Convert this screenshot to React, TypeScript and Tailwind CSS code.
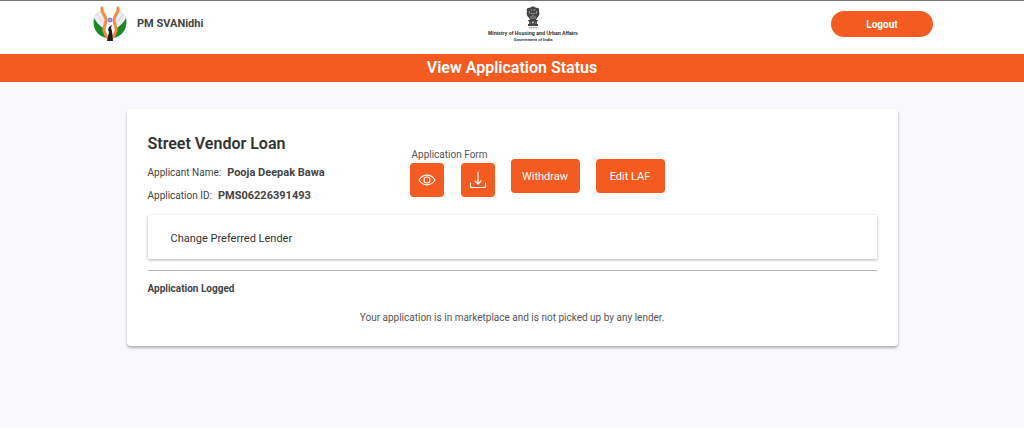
import React from "react";

const details = [
  { label: "Applicant Name:", value: "Pooja Deepak Bawa" },
  { label: "Application ID:", value: "PMS06226391493" },
];

const Logo = () => (
  <svg viewBox="0 0 34 36" className="h-9 w-[34px]" fill="none" aria-hidden="true">
    <path d="M8 5C4 7 2 9 1 13L10 25C12 19 12 13 8 5Z" fill="#eceef4" stroke="#c3c7d4" strokeWidth=".6" />
    <path d="M26 5C30 7 32 9 33 13L24 25C22 19 22 13 26 5Z" fill="#eceef4" stroke="#c3c7d4" strokeWidth=".6" />
    <path d="M4 8L11 18M30 8L23 18" stroke="#c3c7d4" strokeWidth=".7" />
    <path d="M1 12C-1 22 4 30 14 32C11 28 11 25 10 22C6 19 3 16 1 12Z" fill="#188a25" />
    <path d="M33 12C35 22 30 30 20 32C23 28 23 25 24 22C28 19 31 16 33 12Z" fill="#188a25" />
    <path d="M9 2C8 7 13 9 13 14C13 19 10 21 11 25C12 28 13 30 15 32" stroke="#f58a42" strokeWidth="3" strokeLinecap="round" />
    <path d="M25 2C26 7 21 9 21 14C21 19 24 21 23 25C22 28 21 30 19 32" stroke="#f58a42" strokeWidth="3" strokeLinecap="round" />
    <circle cx="17" cy="14" r="2" fill="#aaace8" stroke="#6267c7" strokeWidth="1" />
    <path d="M19 19L16 21L15 24L16 26L14 35H20L19 25L18 22Z" fill="#1c1c1c" />
  </svg>
);

const Emblem = () => (
  <svg viewBox="0 0 16 23" className="h-[23px] w-4" fill="#444" aria-hidden="true">
    <path d="M5 2C6 0 10 0 11 2C13 1 15 3 14 5C15 8 14 10 12 12L11 14H5L4 12C2 10 1 8 2 5C1 3 3 1 5 2Z" />
    <path d="M3 14H13V15H12V18H13V20H3V18H4V15H3Z" />
    <path d="M6 3L7 5M10 3L9 5M4 5L5 8M12 5L11 8M6 7L8 8L10 7M8 9V13M6 10V13M10 10V13" stroke="#bbb" strokeWidth=".7" />
    <circle cx="8" cy="16.5" r="1" fill="#ccc" />
    <path d="M4.5 17H6M10 17H11.5" stroke="#ccc" strokeWidth=".7" />
    <path d="M4 21.7H12" stroke="#777" strokeWidth=".9" strokeDasharray="1.4 .4" />
  </svg>
);

const EyeIcon = () => (
  <svg viewBox="0 0 18 12" className="h-3 w-[18px]" fill="none" stroke="#fff" strokeWidth="1.1" aria-hidden="true">
    <path d="M1 6C5-.5 13-.5 17 6C13 12.5 5 12.5 1 6Z" />
    <circle cx="9" cy="6" r="3" />
  </svg>
);

const DownloadIcon = () => (
  <svg viewBox="0 0 18 18" className="size-[18px]" fill="none" stroke="#fff" strokeWidth="1.2" strokeLinecap="round" strokeLinejoin="round" aria-hidden="true">
    <path d="M9 1V13M6 10L9 13L12 10M1.5 12V15.5Q1.5 16.5 2.5 16.5H15.5Q16.5 16.5 16.5 15.5V12" />
  </svg>
);

const App = () => {
  return (
    <div className="min-h-screen bg-[#f8f8fd] font-['Roboto',sans-serif] text-[#444]">
      {/* Header */}
      <header className="border-t border-[#777] bg-white">
        <div className="mx-auto flex h-[52px] w-full max-w-[842px] items-start justify-between">
          <a href="#" className="mt-[5px] flex w-[144px] items-center gap-2.5 pl-0.5">
            <Logo />
            <span className="text-[11px] font-bold whitespace-nowrap">PM SVANidhi</span>
          </a>
          <div className="flex flex-col items-center pt-[5px] font-['Liberation_Sans',sans-serif] font-bold text-[#222]">
            <Emblem />
            <p className="text-[5px] leading-2 whitespace-nowrap">Ministry of Housing and Urban Affairs</p>
            <p className="text-[4px] leading-1.5">Government of India</p>
          </div>
          <button className="mt-2.5 h-[26px] w-[102px] rounded-full bg-[#f35b20] text-[10px] font-bold text-white">
            Logout
          </button>
        </div>
      </header>

      {/* Page title */}
      <div className="border-t border-[#f8f8fd] bg-[#f35b20] text-center">
        <h1 className="text-base leading-7 font-semibold text-white">View Application Status</h1>
      </div>

      <main className="px-4 pt-[27px]">
        <section className="mx-auto w-full max-w-[771px] rounded-sm bg-white px-[21px] py-5 shadow-[0_2px_3px_rgba(0,0,0,0.3)]">
          <div className="flex items-start">
            <div className="w-[262px] pt-[5px]">
              <h2 className="text-base leading-5 font-semibold text-[#333]">Street Vendor Loan</h2>
              <dl className="pt-[7px]">
                {details.map((item) => (
                  <div key={item.label} className="flex gap-1.5 text-[10px] leading-[23px]">
                    <dt>{item.label}</dt>
                    <dd className="text-[11px] font-bold">{item.value}</dd>
                  </div>
                ))}
              </dl>
            </div>
            <div className="pt-[18px]">
              <p className="pl-0.5 text-[10px] leading-4 text-[#555]">Application Form</p>
              <div className="flex gap-[17px]">
                <button aria-label="View application form" className="flex size-[34px] items-center justify-center rounded-sm bg-[#f35b20]">
                  <EyeIcon />
                </button>
                <button aria-label="Download application form" className="flex size-[34px] items-center justify-center rounded-sm bg-[#f35b20]">
                  <DownloadIcon />
                </button>
              </div>
            </div>
            <div className="flex gap-4 pt-[30px] pl-4 text-[11px] text-white">
              <button className="h-[34px] w-[69px] rounded-sm bg-[#f35b20] pt-0.5">Withdraw</button>
              <button className="h-[34px] w-[69px] rounded-sm bg-[#f35b20] pt-0.5">Edit LAF</button>
            </div>
          </div>

          <button className="mt-2 block w-full bg-white px-[23px] pt-1 text-left text-[11px] leading-10 text-[#333] shadow-[0_1px_3px_rgba(0,0,0,0.3)]">
            Change Preferred Lender
          </button>

          <hr className="mt-[11px] border-[#bbb]" />
          <h3 className="pt-2.5 text-[10px] leading-4 font-bold">Application Logged</h3>
          <p className="pt-[13px] text-center text-[10px] leading-4 text-[#555]">
            Your application is in marketplace and is not picked up by any lender.
          </p>
        </section>
      </main>
    </div>
  );
};

export default App;
